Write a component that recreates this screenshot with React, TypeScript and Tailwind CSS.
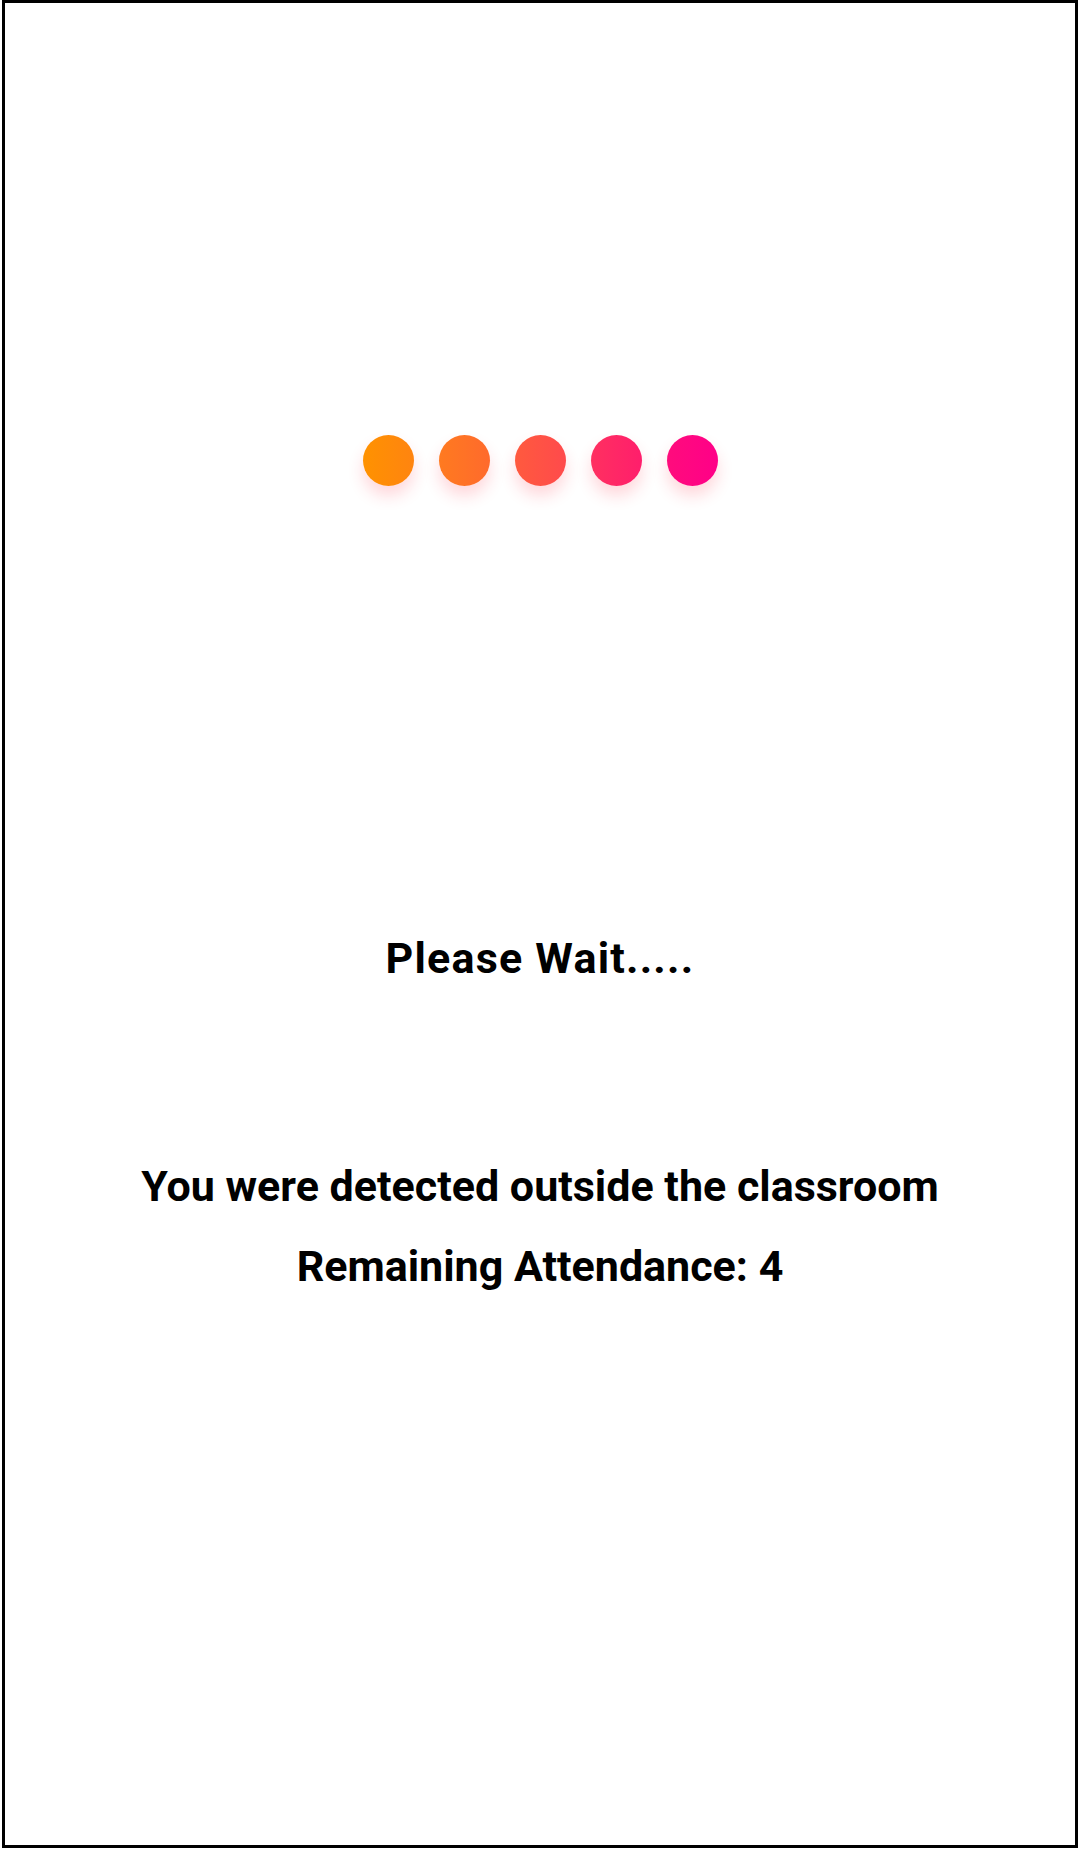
const dots = [
  "bg-[linear-gradient(90deg,#ff9200,#ff8410)]",
  "bg-[linear-gradient(90deg,#ff7a20,#ff6a2c)]",
  "bg-[linear-gradient(90deg,#ff5a3e,#ff4a4c)]",
  "bg-[linear-gradient(90deg,#ff3060,#ff1e6c)]",
  "bg-[linear-gradient(90deg,#ff0c7c,#ff0088)]",
];

export default function App() {
  return (
    <div className="w-[1078px] h-[1854px] bg-white font-['Roboto',sans-serif]">
      <div className="ml-[2px] w-[1076px] h-[1848px] border-[3px] border-black flex flex-col items-center">
        <div className="mt-[432px] flex gap-[25px]">
          {dots.map((c, i) => (
            <span
              key={i}
              className={`w-[51px] h-[51px] rounded-full shadow-[0_10px_16px_rgba(255,40,60,0.18)] ${c}`}
            />
          ))}
        </div>

        <h1 className="mt-[448px] font-bold text-[43px] leading-[48px] tracking-[1.2px] text-black">
          Please Wait.....
        </h1>

        <div className="mt-[180px] flex flex-col items-center gap-[32px] font-bold text-[43px] leading-[48px] text-black">
          <p>You were detected outside the classroom</p>
          <p>Remaining Attendance: 4</p>
        </div>
      </div>
    </div>
  );
}
